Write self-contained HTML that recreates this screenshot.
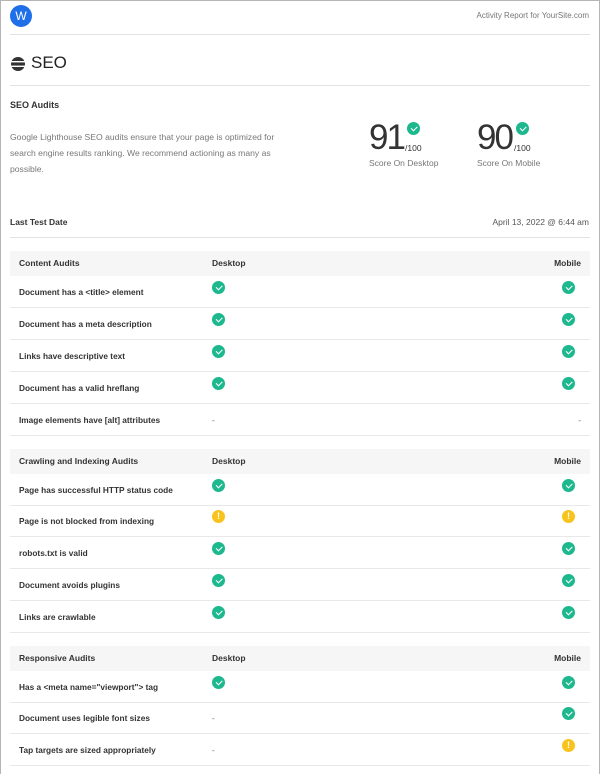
<!DOCTYPE html>
<html><head><meta charset="utf-8"><style>
*{margin:0;padding:0;box-sizing:border-box}
body{width:600px;height:774px;background:#fff;font-family:"Liberation Sans",sans-serif;color:#333;position:relative;overflow:hidden}
.frame{position:absolute;left:0;top:0;width:600px;height:774px;border:1px solid #b5b5b5;border-bottom:none}
.a{position:absolute}
.hr{position:absolute;left:10px;width:580px;height:1px;background:#e3e3e3}
.hdr{position:absolute;left:10px;width:580px;height:25px;background:#f6f6f6;font-size:8.5px;font-weight:bold;color:#333}
.hdr span,.row span{position:absolute;top:0}
.row{position:absolute;left:10px;width:580px;height:32px;border-bottom:1px solid #e8e8e8;font-size:8.3px;font-weight:bold;color:#333}
.t{left:9px;line-height:32px}
.hdr .t{line-height:25px}
.d{left:202px}
.m{right:9px}
.hdr .d,.hdr .m{line-height:25px}
.ic{position:absolute;top:5px;width:13px;height:13px;border-radius:50%;}
.ok{background:#1db88e}
.ok:after{content:"";position:absolute;left:3.5px;top:3.5px;width:5px;height:2.5px;border-left:1.6px solid #fff;border-bottom:1.6px solid #fff;transform:rotate(-45deg)}
.w{background:#f7c31c;color:#fff;font-size:9px;font-weight:bold;text-align:center;line-height:13px;font-style:normal}
.icd{left:202px}.icm{left:552px}
.dash{position:absolute;top:0;line-height:32px;font-weight:normal;color:#666}
</style></head><body>
<div class="frame"></div>
<div class="a" style="left:10px;top:5px;width:22px;height:22px;border-radius:50%;background:#1f6fe8;color:#fff;font-size:12px;text-align:center;line-height:22px">W</div>
<div class="a" style="right:11px;top:11px;font-size:8px;color:#777">Activity Report for YourSite.com</div>
<div class="hr" style="top:34px"></div>
<svg class="a" style="left:10px;top:57px" width="16" height="14" viewBox="0 0 16 14"><circle cx="8" cy="7" r="7" fill="#333"/><rect x="0" y="4" width="16" height="1.4" fill="#fff"/><rect x="0" y="8.6" width="16" height="1.4" fill="#fff"/></svg>
<div class="a" style="left:31px;top:53px;font-size:17px;color:#222">SEO</div>
<div class="hr" style="top:85px"></div>
<div class="a" style="left:10px;top:100px;font-size:9px;font-weight:bold;color:#333">SEO Audits</div>
<div class="a" style="left:10px;top:129px;width:275px;font-size:8.6px;line-height:16px;color:#777">Google Lighthouse SEO audits ensure that your page is optimized for search engine results ranking. We recommend actioning as many as possible.</div>
<div class="a" style="left:369px;top:119px;font-size:35px;color:#333;line-height:38px;letter-spacing:-2px">91</div>
<div class="ic ok" style="left:407px;top:122px"></div>
<div class="a" style="left:405px;top:143px;font-size:8.5px;color:#333">/100</div>
<div class="a" style="left:369px;top:158px;font-size:8.5px;color:#777">Score On Desktop</div>
<div class="a" style="left:477px;top:119px;font-size:35px;color:#333;line-height:38px;letter-spacing:-2px">90</div>
<div class="ic ok" style="left:516px;top:122px"></div>
<div class="a" style="left:514px;top:143px;font-size:8.5px;color:#333">/100</div>
<div class="a" style="left:477px;top:158px;font-size:8.5px;color:#777">Score On Mobile</div>
<div class="a" style="left:10px;top:217px;font-size:8.5px;font-weight:bold;color:#333">Last Test Date</div>
<div class="a" style="right:11px;top:217px;font-size:8.5px;color:#555">April 13, 2022 @ 6:44 am</div>
<div class="hr" style="top:237px"></div>

<div class="hdr" style="top:251px"><span class="t">Content Audits</span><span class="d">Desktop</span><span class="m">Mobile</span></div>
<div class="row" style="top:276px"><span class="t">Document has a &lt;title&gt; element</span><i class="ic ok icd"></i><i class="ic ok icm"></i></div>
<div class="row" style="top:308px"><span class="t">Document has a meta description</span><i class="ic ok icd"></i><i class="ic ok icm"></i></div>
<div class="row" style="top:340px"><span class="t">Links have descriptive text</span><i class="ic ok icd"></i><i class="ic ok icm"></i></div>
<div class="row" style="top:372px"><span class="t">Document has a valid hreflang</span><i class="ic ok icd"></i><i class="ic ok icm"></i></div>
<div class="row" style="top:404px"><span class="t">Image elements have [alt] attributes</span><span class="dash" style="left:202px">-</span><span class="dash" style="right:9px">-</span></div>

<div class="hdr" style="top:449px"><span class="t">Crawling and Indexing Audits</span><span class="d">Desktop</span><span class="m">Mobile</span></div>
<div class="row" style="top:474px"><span class="t">Page has successful HTTP status code</span><i class="ic ok icd"></i><i class="ic ok icm"></i></div>
<div class="row" style="top:505px"><span class="t">Page is not blocked from indexing</span><i class="ic w icd">!</i><i class="ic w icm">!</i></div>
<div class="row" style="top:537px"><span class="t">robots.txt is valid</span><i class="ic ok icd"></i><i class="ic ok icm"></i></div>
<div class="row" style="top:569px"><span class="t">Document avoids plugins</span><i class="ic ok icd"></i><i class="ic ok icm"></i></div>
<div class="row" style="top:601px"><span class="t">Links are crawlable</span><i class="ic ok icd"></i><i class="ic ok icm"></i></div>

<div class="hdr" style="top:646px"><span class="t">Responsive Audits</span><span class="d">Desktop</span><span class="m">Mobile</span></div>
<div class="row" style="top:671px"><span class="t">Has a &lt;meta name="viewport"&gt; tag</span><i class="ic ok icd"></i><i class="ic ok icm"></i></div>
<div class="row" style="top:702px"><span class="t">Document uses legible font sizes</span><span class="dash" style="left:202px">-</span><i class="ic ok icm"></i></div>
<div class="row" style="top:734px"><span class="t">Tap targets are sized appropriately</span><span class="dash" style="left:202px">-</span><i class="ic w icm">!</i></div>
</body></html>
